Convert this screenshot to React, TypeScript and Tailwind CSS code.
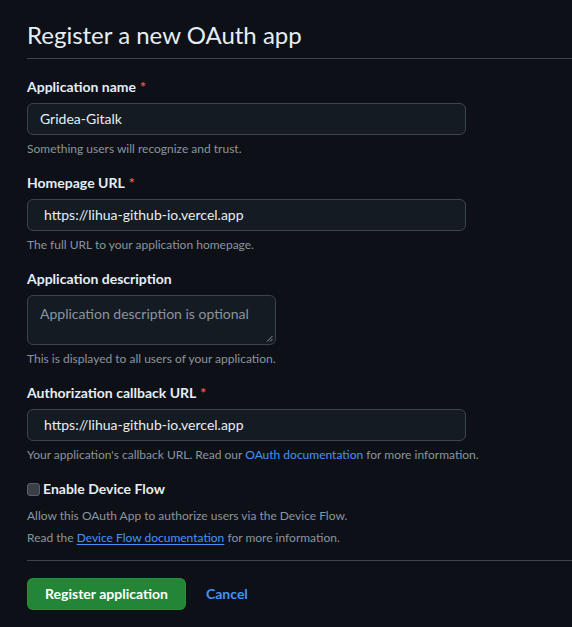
import type { ReactNode } from "react"

const font = { fontFamily: 'Lato, "Segoe UI", sans-serif' }

function Label({ children, required = false }: { children: ReactNode; required?: boolean }) {
  return (
    <div className="flex h-5 items-center text-sm font-bold text-[#e6edf3]">
      {children}
      {required && <span className="ml-1 text-[#f85149]">*</span>}
    </div>
  )
}

function Help({ children }: { children: ReactNode }) {
  return <p className="mt-[5px] text-xs leading-[18px] text-[#8b949e]">{children}</p>
}

function TextInput({ value, inset = false }: { value: string; inset?: boolean }) {
  return (
    <div
      className={`mt-[6px] flex h-8 w-[439px] items-center rounded-md border border-[#3d444d] bg-[#151b23] text-sm text-[#e6edf3] ${
        inset ? "pl-4" : "pl-3"
      }`}
    >
      {value}
    </div>
  )
}

export default function App() {
  return (
    <div className="min-h-[627px] w-[572px] overflow-hidden bg-[#0d1117] pl-[27px] pt-[19px]" style={font}>
      {/* Heading */}
      <h1 className="text-2xl font-normal leading-8 text-[#e6edf3]">Register a new OAuth app</h1>
      <div className="mt-[7px] border-b border-[#3d444d]"></div>

      {/* Form */}
      <div className="pt-[18px]">
        <Label required>Application name</Label>
        <TextInput value="Gridea-Gitalk" />
        <Help>Something users will recognize and trust.</Help>

        <div className="mt-[15px]">
          <Label required>Homepage URL</Label>
          <TextInput value="https://lihua-github-io.vercel.app" inset />
          <Help>The full URL to your application homepage.</Help>
        </div>

        <div className="mt-[15px]">
          <Label>Application description</Label>
          <div className="relative mt-[6px] h-[50px] w-[249px] rounded-md border border-[#3d444d] bg-[#151b23] pl-3 pt-[8px] text-sm text-[#8b949e]">
            Application description is optional
            <svg className="absolute bottom-[2px] right-[2px]" width="7" height="7" viewBox="0 0 7 7">
              <path d="M6.5 1 L1 6.5 M6.5 4 L4 6.5" stroke="#8b949e" strokeWidth="1" />
            </svg>
          </div>
          <Help>This is displayed to all users of your application.</Help>
        </div>

        <div className="mt-[15px]">
          <Label required>Authorization callback URL</Label>
          <TextInput value="https://lihua-github-io.vercel.app" inset />
          <Help>
            Your application's callback URL. Read our{" "}
            <span className="text-[#4493f8]">OAuth documentation</span> for more information.
          </Help>
        </div>

        <div className="mt-[15px] flex h-5 items-center gap-[3px]">
          <span className="h-[13px] w-[13px] rounded-[3px] border border-[#5a6069] bg-[#3a3f46]"></span>
          <span className="text-sm font-bold text-[#e6edf3]">Enable Device Flow</span>
        </div>
        <p className="mt-[8px] text-xs leading-[18px] text-[#8b949e]">
          Allow this OAuth App to authorize users via the Device Flow.
        </p>
        <p className="mt-1 text-xs leading-[18px] text-[#8b949e]">
          Read the <span className="text-[#4493f8] underline underline-offset-2">Device Flow documentation</span> for
          more information.
        </p>

        <div className="mt-[13px] border-b border-[#3d444d]"></div>

        <div className="flex items-center gap-5 pt-[17px]">
          <button className="h-8 w-[159px] rounded-md border border-[#2ea043]/40 bg-[#238636] text-sm font-bold text-white">
            Register application
          </button>
          <span className="text-sm font-bold text-[#4493f8]">Cancel</span>
        </div>
      </div>
    </div>
  )
}
